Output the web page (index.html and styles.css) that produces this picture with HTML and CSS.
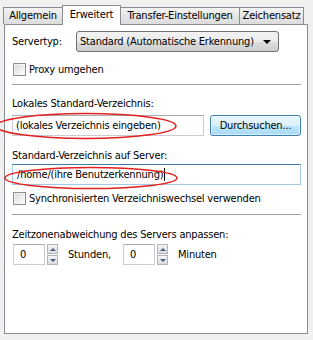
FILE: index.html
```html
<!DOCTYPE html>
<html lang="de">
<head>
  <meta charset="UTF-8">
  <title>Erweitert</title>
  <link rel="stylesheet" href="styles.css">
</head>
<body>
<div class="dialog">
  <div class="tabs">
    <div class="tab tab-first">Allgemein</div>
    <div class="tab tab-active">Erweitert</div>
    <div class="tab tab-transfer">Transfer-Einstellungen</div>
    <div class="tab tab-charset">Zeichensatz</div>
  </div>

  <div class="panel">
    <div class="server-row">
      <span class="server-label">Servertyp:</span>
      <div class="combo">
        <span class="combo-text">Standard (Automatische Erkennung)</span>
        <span class="combo-arrow"></span>
      </div>
    </div>

    <div class="check check-proxy">
      <span class="check-box"></span>
      <span>Proxy umgehen</span>
    </div>

    <div class="sep sep-top"></div>

    <div class="caption caption-local">Lokales Standard-Verzeichnis:</div>
    <div class="path-row">
      <div class="field field-local">(lokales Verzeichnis eingeben)</div>
      <div class="browse">Durchsuchen...</div>
    </div>

    <div class="caption caption-remote">Standard-Verzeichnis auf Server:</div>
    <div class="field field-remote">/home/(ihre Benutzerkennung)<span class="caret"></span></div>

    <div class="check check-sync">
      <span class="check-box"></span>
      <span>Synchronisierten Verzeichniswechsel verwenden</span>
    </div>

    <div class="sep sep-bottom"></div>

    <div class="caption caption-tz">Zeitzonenabweichung des Servers anpassen:</div>
    <div class="tz-row">
      <div class="field field-num">0</div>
      <div class="spin">
        <span class="spin-btn"><span class="tri-up"></span></span>
        <span class="spin-btn"><span class="tri-down"></span></span>
      </div>
      <span class="unit unit-hours">Stunden,</span>
      <div class="field field-num">0</div>
      <div class="spin">
        <span class="spin-btn"><span class="tri-up"></span></span>
        <span class="spin-btn"><span class="tri-down"></span></span>
      </div>
      <span class="unit">Minuten</span>
    </div>
  </div>

  <!-- red markings drawn over the screenshot -->
  <svg class="marks" width="313" height="340" viewBox="0 0 313 340">
    <ellipse cx="86" cy="126" rx="90" ry="12.5" fill="none" stroke="#e3211e" stroke-width="1.5"/>
    <ellipse cx="91" cy="178" rx="86" ry="10.5" fill="none" stroke="#e3211e" stroke-width="1.5"/>
  </svg>
</div>
</body>
</html>
```

FILE: styles.css
```css
body {
  margin: 0;
  background-color: #f0f0f0;
  color: #000000;
  font-family: "DejaVu Sans Condensed", "DejaVu Sans", sans-serif;
  font-stretch: condensed;
  font-size: 11px;
  line-height: 13px;
  letter-spacing: -0.2px;
}

.dialog {
  position: relative;
  width: 313px;
  height: 340px;
  padding: 5px 0 0 4px;
  box-sizing: border-box;
}

/* tabs */

.tabs {
  display: flex;
  align-items: flex-end;
  height: 19px;
  margin-left: -1px;
}

.tab {
  height: 17px;
  box-sizing: border-box;
  border: 1px solid #898c95;
  border-bottom: none;
  background: linear-gradient(#f3f3f3, #e6e6e6 50%, #dcdcdc);
  margin-left: -1px;
  display: flex;
  align-items: center;
  justify-content: center;
  padding-bottom: 1px;
  white-space: nowrap;
}

.tab-first {
  margin-left: 0;
  width: 60px;
}

.tab-active {
  position: relative;
  z-index: 1;
  width: 59px;
  height: 20px;
  margin-bottom: -1px;
  background: #ffffff;
  padding-bottom: 3px;
}

.tab-transfer {
  width: 120px;
}

.tab-charset {
  width: 65px;
}

/* panel */

.panel {
  width: 304px;
  height: 310px;
  box-sizing: border-box;
  border: 1px solid #898c95;
  background: #ffffff;
  padding: 0 6px 0 7px;
}

.server-row {
  display: flex;
  align-items: center;
  height: 21px;
  margin-top: 6px;
}

.server-label {
  width: 64px;
}

.combo {
  width: 203px;
  height: 21px;
  box-sizing: border-box;
  border: 1px solid #707070;
  border-radius: 3px;
  background: linear-gradient(#f2f2f2, #ebebeb 50%, #dddddd 51%, #cfcfcf);
  display: flex;
  align-items: center;
  padding: 0 7px 0 3px;
}

.combo-text {
  flex: 1;
}

.combo-arrow {
  width: 0;
  height: 0;
  border-left: 4px solid transparent;
  border-right: 4px solid transparent;
  border-top: 4px solid #000000;
}

.check {
  display: flex;
  align-items: center;
  height: 13px;
}

.check-box {
  width: 13px;
  height: 13px;
  box-sizing: border-box;
  border: 1px solid #8e8f8f;
  background: linear-gradient(135deg, #d6d6d6, #f4f4f4 70%, #ffffff);
  box-shadow: inset 0 0 0 1px #f4f4f4;
  margin-left: 1px;
  margin-right: 3px;
}

.check-proxy {
  margin-top: 11px;
}

.check-sync {
  margin-top: 7px;
}

.sep {
  height: 1px;
  background: #a0a0a0;
}

.sep-top {
  margin-top: 8px;
}

.sep-bottom {
  margin-top: 9px;
}

.caption-local {
  margin-top: 12px;
}

.caption-remote {
  margin-top: 13px;
}

.caption-tz {
  margin-top: 13px;
}

.field {
  height: 21px;
  box-sizing: border-box;
  border: 1px solid #c9ccd2;
  border-top-color: #abadb3;
  background: #ffffff;
  display: flex;
  align-items: center;
  padding-left: 3px;
}

.path-row {
  display: flex;
  margin-top: 5px;
}

.field-local {
  width: 192px;
}

.browse {
  width: 91px;
  height: 21px;
  box-sizing: border-box;
  margin-left: 6px;
  border: 1px solid #3c7fb1;
  border-radius: 3px;
  background: linear-gradient(#eaf6fd, #d9f0fc 50%, #bee6fd 51%, #a7d9f5);
  box-shadow: inset 0 0 0 1px rgba(255, 255, 255, 0.6);
  display: flex;
  align-items: center;
  justify-content: center;
}

.field-remote {
  margin-top: 2px;
  width: 289px;
  border-color: #a4c9e3;
  border-top-color: #3d7bad;
  padding-left: 4px;
}

.caret {
  display: inline-block;
  width: 1px;
  height: 13px;
  background: #000000;
  margin-left: 1px;
}

.tz-row {
  display: flex;
  align-items: center;
  margin-top: 3px;
  height: 21px;
}

.field-num {
  width: 32px;
  padding-left: 6px;
  margin-left: 1px;
}

.spin {
  display: flex;
  flex-direction: column;
  gap: 1px;
  margin-left: 2px;
}

.spin-btn {
  width: 11px;
  height: 10px;
  box-sizing: border-box;
  border: 1px solid #b2b5ba;
  background: linear-gradient(#f5f5f5, #dcdcdc);
  display: flex;
  align-items: center;
  justify-content: center;
}

.tri-up,
.tri-down {
  width: 0;
  height: 0;
  border-left: 3px solid transparent;
  border-right: 3px solid transparent;
}

.tri-up {
  border-bottom: 3px solid #4d6185;
}

.tri-down {
  border-top: 3px solid #4d6185;
}

.unit {
  margin-left: 10px;
}

.unit-hours {
  width: 54px;
}

.marks {
  position: absolute;
  left: 0;
  top: 0;
  pointer-events: none;
}
```
